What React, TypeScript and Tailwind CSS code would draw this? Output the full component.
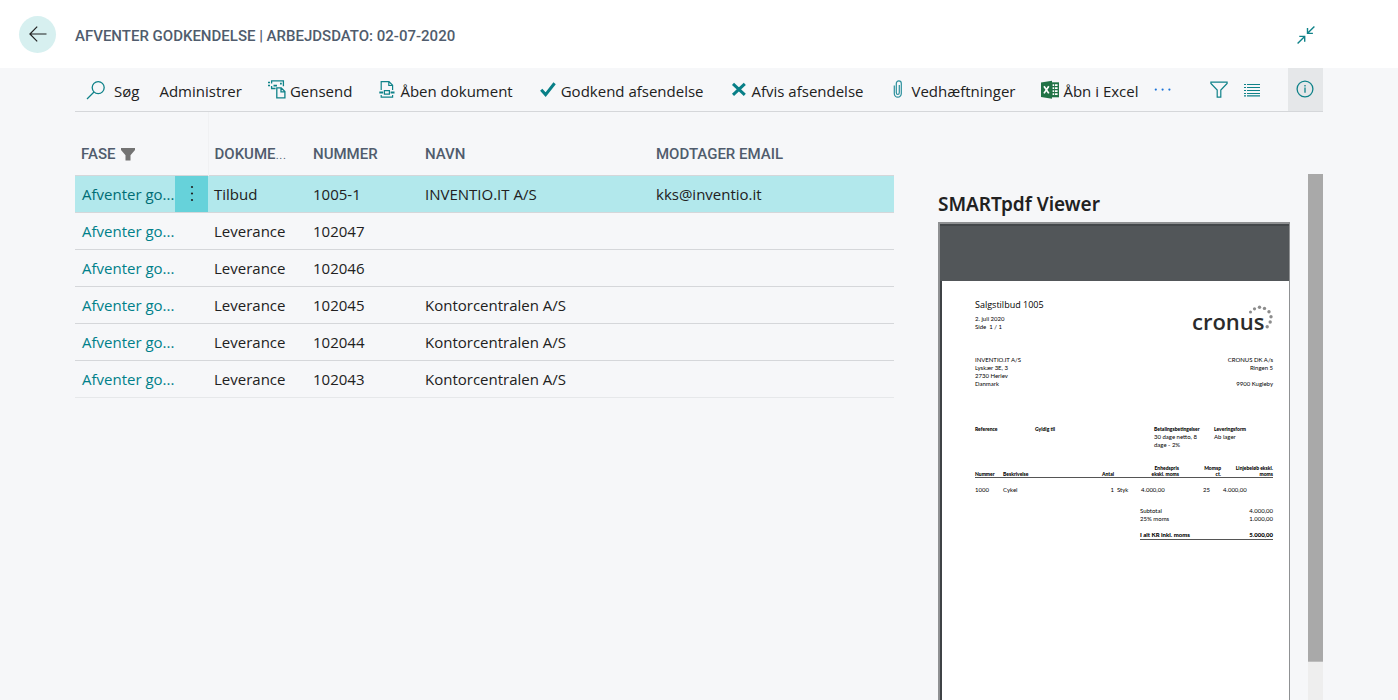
import { useState } from "react";
import type { ReactNode } from "react";

interface Approval {
  type: string;
  number: string;
  name: string;
  email: string;
}

interface Action {
  label: string;
  icon: ReactNode;
}

const approvals: Approval[] = [
  { type: "Tilbud", number: "1005-1", name: "INVENTIO.IT A/S", email: "kks@inventio.it" },
  { type: "Leverance", number: "102047", name: "", email: "" },
  { type: "Leverance", number: "102046", name: "", email: "" },
  { type: "Leverance", number: "102045", name: "Kontorcentralen A/S", email: "" },
  { type: "Leverance", number: "102044", name: "Kontorcentralen A/S", email: "" },
  { type: "Leverance", number: "102043", name: "Kontorcentralen A/S", email: "" },
];

const SearchIcon = () => (
  <svg width="20" height="20" viewBox="0 0 20 20" fill="none" stroke="#0f8289" strokeWidth="1.3" aria-hidden="true">
    <circle cx="12.2" cy="7.6" r="6" />
    <path d="M8 12 1 19" />
  </svg>
);

const ResendIcon = () => (
  <svg width="18" height="20" viewBox="0 0 18 20" fill="none" stroke="#0f8289" strokeWidth="1.3" aria-hidden="true">
    <path d="M3.6 3.6V.9h11.8v5.4M3.6 6v2.5h4" />
    <path d="M0 2.5h2M0 5.5h2M5.5 5.6H9M12 3.6h1.8" strokeWidth="1.6" />
    <path d="M8.8 7.9h4.4l3.7 3.7v6.2H8.8zM13 8v3.8h3.8" />
  </svg>
);

const DocumentIcon = () => (
  <svg width="18" height="20" viewBox="0 0 18 20" fill="none" stroke="#0f8289" strokeWidth="1.2" aria-hidden="true">
    <path d="M3.2 10V1.7H11l3.6 3.6V10M10.8 1.9v3.6h3.6M3.2 15v2.2h11.4V15" />
    <path d="M6.4 10.7h5v3.4h-5z" />
    <path d="M1.3 12.4h3.9M12.6 12.4h3.9" strokeWidth="2" />
  </svg>
);

const CheckIcon = () => (
  <svg width="18" height="20" viewBox="0 0 18 20" fill="none" stroke="#087f87" strokeWidth="3" aria-hidden="true">
    <path d="m2.2 9.8 4.4 4.8 9-11.3" />
  </svg>
);

const CrossIcon = () => (
  <svg width="18" height="20" viewBox="0 0 18 20" fill="none" stroke="#087f87" strokeWidth="3" aria-hidden="true">
    <path d="m3 3.9 11.8 11M14.8 3.9 3 14.9" />
  </svg>
);

const ClipIcon = () => (
  <svg width="18" height="20" viewBox="0 0 18 20" fill="none" stroke="#2b8f9c" strokeWidth="1.2" aria-hidden="true">
    <path d="M5.3 5.5v8a3.5 3.7 0 0 0 7 0v-10a2.5 2.7 0 0 0-5 0v9a1.5 2 0 0 0 3 0V5" />
  </svg>
);

const ExcelIcon = () => (
  <svg width="18" height="20" viewBox="0 0 18 20" aria-hidden="true">
    <path d="M9 2.3h9v15H9z" fill="#217346" />
    <path d="M11.6 4.2h1.6v1.7h-1.6zM14 4.2h2.6v1.7H14zM11.6 7.2h1.6v1.7h-1.6zM14 7.2h2.6v1.7H14zM11.6 10.2h1.6v1.7h-1.6zM14 10.2h2.6v1.7H14zM11.6 13.2h1.6v1.7h-1.6zM14 13.2h2.6v1.7H14z" fill="#fff" />
    <path d="M0 2.6 11 .8v18L0 17z" fill="#217346" />
    <path d="m3 6.2 4.8 7.2M7.8 6.2 3 13.4" stroke="#fff" strokeWidth="1.7" />
  </svg>
);

const FilterIcon = () => (
  <svg width="18" height="18" viewBox="0 0 18 18" fill="none" stroke="#0f8289" strokeWidth="1.2" aria-hidden="true">
    <path d="M.9 1.2h16.2v1.3L10.800 9v7.2H7.200V9L.9 2.500z" />
  </svg>
);

const ListIcon = () => (
  <svg width="16" height="14" viewBox="0 0 16 14" stroke="#0f8289" strokeWidth="1.2" aria-hidden="true">
    <path d="M0 1.500h2M0 4.500h2M0 7.500h2M0 10.500h2M0 12.900h2M3 1.500h13M3 4.500h13M3 7.500h13M3 10.500h13M3 12.900h13" />
  </svg>
);

const InfoIcon = () => (
  <svg width="18" height="18" viewBox="0 0 18 18" fill="none" stroke="#0f8289" strokeWidth="1.3" aria-hidden="true">
    <circle cx="9" cy="9" r="7.9" />
    <path d="M9 7.6v5.2M9 4.9v1.5" />
  </svg>
);

const actions: Action[] = [
  { label: "Gensend", icon: <ResendIcon /> },
  { label: "Åben dokument", icon: <DocumentIcon /> },
  { label: "Godkend afsendelse", icon: <CheckIcon /> },
  { label: "Afvis afsendelse", icon: <CrossIcon /> },
  { label: "Vedhæftninger", icon: <ClipIcon /> },
  { label: "Åbn i Excel", icon: <ExcelIcon /> },
];

const CronusLogo = () => (
  <div className="relative h-9 w-[81px]">
    <span className="absolute left-0 top-0 font-['Open_Sans',sans-serif] text-[22px] font-semibold leading-8 text-[#2b2b2b]">
      cronus
    </span>
    <svg className="absolute right-0 top-0" width="26" height="28" viewBox="0 0 26 28" fill="#8c8c8c" aria-hidden="true">
      <circle cx="3.5" cy="7" r="1.5" />
      <circle cx="7.5" cy="3.8" r="1.6" />
      <circle cx="12.5" cy="2.3" r="1.7" />
      <circle cx="17.5" cy="3.4" r="1.7" />
      <circle cx="22" cy="6.7" r="1.7" />
      <circle cx="24" cy="11.8" r="1.7" />
      <circle cx="23.2" cy="17" r="1.7" />
      <circle cx="20.2" cy="21.8" r="1.7" />
    </svg>
  </div>
);

const Invoice = () => (
  <div className="min-h-0 flex-1 bg-white pl-[33px] pr-4 pt-4 font-['Lato',sans-serif] text-[6px] leading-2 text-black">
    <div className="flex h-[59px] justify-between">
      <div>
        <h3 className="font-['Open_Sans',sans-serif] text-[9px] leading-4">Salgstilbud 1005</h3>
        <p className="pt-0.5">2. juli 2020</p>
        <p>Side&nbsp; 1 / 1</p>
      </div>
      <div className="pt-2">
        <CronusLogo />
      </div>
    </div>
    <div className="flex h-[69px] justify-between">
      <p>
        INVENTIO.IT A/S
        <br />
        Lyskær 3E, 3
        <br />
        2730 Herlev
        <br />
        Danmark
      </p>
      <p className="text-right">
        CRONUS DK A/s
        <br />
        Ringen 5
        <br />
        <br />
        9900 Kugleby
      </p>
    </div>
    <dl className="grid h-10 grid-cols-[60px_119px_60px_59px]">
      <div>
        <dt className="text-[5px] font-black">Reference</dt>
      </div>
      <div>
        <dt className="text-[5px] font-black">Gyldig til</dt>
      </div>
      <div>
        <dt className="text-[5px] font-black">Betalingsbetingelser</dt>
        <dd className="w-12">30 dage netto, 8 dage - 2%</dd>
      </div>
      <div>
        <dt className="text-[5px] font-black">Leveringsform</dt>
        <dd>Ab lager</dd>
      </div>
    </dl>
    <table className="w-full table-fixed border-collapse">
      <colgroup>
        <col className="w-7" />
        <col className="w-[72px]" />
        <col className="w-[39px]" />
        <col className="w-[27px]" />
        <col className="w-[38px]" />
        <col className="w-[42px]" />
        <col />
      </colgroup>
      <thead>
        <tr className="border-b border-[#555] align-bottom text-[5px] leading-[6px]">
          <th className="text-left font-black">Nummer</th>
          <th className="text-left font-black">Beskrivelse</th>
          <th className="text-right font-black">Antal</th>
          <th />
          <th className="text-right font-black">
            Enhedspris
            <br />
            ekskl. moms
          </th>
          <th className="text-right font-black">
            Momsp
            <br />
            ct.
          </th>
          <th className="text-right font-black">
            Linjebeløb ekskl.
            <br />
            moms
          </th>
        </tr>
      </thead>
      <tbody>
        <tr className="align-bottom">
          <td className="pt-2">1000</td>
          <td className="pt-2">Cykel</td>
          <td className="pt-2 text-right">1</td>
          <td className="pl-[3px] pt-2">Styk</td>
          <td className="pt-2">4.000,00</td>
          <td className="pr-[11px] pt-2 text-right">25</td>
          <td className="pl-0.5 pt-2">4.000,00</td>
        </tr>
      </tbody>
    </table>
    <dl className="ml-auto mt-[13px] w-[133px]">
      <div className="flex justify-between">
        <dt>Subtotal</dt>
        <dd>4.000,00</dd>
      </div>
      <div className="flex justify-between">
        <dt>25% moms</dt>
        <dd>1.000,00</dd>
      </div>
      <div className="mt-2 flex justify-between border-b border-[#555] font-black">
        <dt>I alt KR inkl. moms</dt>
        <dd>5.000,00</dd>
      </div>
    </dl>
  </div>
);

const App = () => {
  const [selected, setSelected] = useState<string>("1005-1");

  return (
    <div className="flex h-screen flex-col overflow-hidden bg-[#f6f7f9] font-['Open_Sans',sans-serif] text-[15px] text-[#212121]">
      <header className="flex h-[68px] shrink-0 items-center bg-white pl-[19px] pr-[83px]">
        <button aria-label="Tilbage" className="flex size-[37px] items-center justify-center rounded-full bg-[#d7f0f0]">
          <svg width="18" height="16" viewBox="0 0 18 16" fill="none" stroke="#212121" strokeWidth="1.2" aria-hidden="true">
            <path d="M8.2.6.9 8l7.300 7.400M.9 8H17.500" />
          </svg>
        </button>
        <h1 className="ml-[19px] pt-1 font-['Roboto',sans-serif] text-[15px] font-medium text-[#505c6d]">
          AFVENTER GODKENDELSE | ARBEJDSDATO: 02-07-2020
        </h1>
        <button aria-label="Minimer" className="ml-auto pt-0.5">
          <svg width="18" height="18" viewBox="0 0 18 18" fill="none" stroke="#0f8289" strokeWidth="1.4" aria-hidden="true">
            <path d="M17.4.6 10.800 7.100M10.500 2v5.400h5.400M.6 17.400l6.800-6.700M2.300 10.400h5.400v5.300" />
          </svg>
        </button>
      </header>

      <main className="flex min-h-0 flex-1 flex-col px-[75px]">
        <div className="flex h-11 shrink-0 items-center border-b border-[#d5d7da]">
          <button className="flex items-center gap-2 whitespace-nowrap pl-[11px]">
            <SearchIcon />
            <span className="pt-1">Søg</span>
          </button>
          <button className="ml-5 whitespace-nowrap pt-1">Administrer</button>
          <div className="ml-[26px] flex items-center gap-[26px]">
            {actions.map((action) => (
              <button key={action.label} className="flex items-center gap-1 whitespace-nowrap">
                {action.icon}
                <span className="pt-1">{action.label}</span>
              </button>
            ))}
          </div>
          <button aria-label="Flere indstillinger" className="ml-4">
            <svg width="18" height="4" viewBox="0 0 18 4" fill="#1a73d9" aria-hidden="true">
              <circle cx="1.8" cy="1.6" r="1.1" />
              <circle cx="8.6" cy="1.6" r="1.1" />
              <circle cx="15.4" cy="1.6" r="1.1" />
            </svg>
          </button>
          <div className="ml-auto flex items-center gap-4 self-stretch">
            <button aria-label="Filter">
              <FilterIcon />
            </button>
            <button aria-label="Listevisning">
              <ListIcon />
            </button>
            <button aria-label="Faktaboks" className="ml-3 flex w-[35px] items-center justify-center self-stretch bg-[#e5e7e9] pb-0.5 pr-px">
              <InfoIcon />
            </button>
          </div>
        </div>

        <div className="flex min-h-0 flex-1 gap-11">
          <div className="min-w-0 flex-1">
            <table className="w-full table-fixed border-collapse text-left">
              <colgroup>
                <col className="w-[100px]" />
                <col className="w-[33px]" />
                <col className="w-[99px]" />
                <col className="w-28" />
                <col className="w-[231px]" />
                <col />
              </colgroup>
              <thead>
                <tr className="h-[63px] border-b border-[#d5d7da] font-['Roboto',sans-serif] text-[15px] text-[#505c6d]">
                  <th className="pl-1.5 pt-[22px] font-medium">
                    <span className="flex items-center gap-1.5">
                      FASE
                      <svg width="14" height="13" viewBox="0 0 14 13" fill="#737373" aria-hidden="true">
                        <path d="M0 0h14v2L9.500 7.300v5.200h-5V7.300L0 2z" />
                      </svg>
                    </span>
                  </th>
                  <th className="border-r border-[#f0f1f3]" />
                  <th className="pl-1.5 pt-[22px] font-medium">
                    DOKUME<span className="font-light">...</span>
                  </th>
                  <th className="pl-1.5 pt-[22px] font-medium">NUMMER</th>
                  <th className="pl-1.5 pt-[22px] font-medium">NAVN</th>
                  <th className="pl-1.5 pt-[22px] font-medium">MODTAGER EMAIL</th>
                </tr>
              </thead>
              <tbody>
                {approvals.map((row) => {
                  const active = row.number === selected;
                  return (
                    <tr
                      key={row.number}
                      onClick={() => setSelected(row.number)}
                      className={`h-[37px] border-b border-[#d5d7da] last:border-[#e6e8ea] ${active ? "bg-[#b2e8ec]" : ""}`}
                    >
                      <td className="whitespace-nowrap pl-[7px] pt-0.5">
                        <a href="#" className={active ? "text-[#006d75]" : "text-[#00808a]"}>
                          Afventer go...
                        </a>
                      </td>
                      <td className={active ? "bg-[#66d2da]" : ""}>
                        {active && (
                          <button aria-label="Vis flere indstillinger" className="flex w-full justify-center">
                            <svg width="4" height="18" viewBox="0 0 4 18" fill="#212121" aria-hidden="true">
                              <circle cx="2" cy="2" r="1.1" />
                              <circle cx="2" cy="8.500" r="1.1" />
                              <circle cx="2" cy="15" r="1.1" />
                            </svg>
                          </button>
                        )}
                      </td>
                      <td className="truncate pl-1.5 pt-0.5">{row.type}</td>
                      <td className="truncate pl-1.5 pt-0.5">{row.number}</td>
                      <td className="truncate pl-1.5 pt-0.5">{row.name}</td>
                      <td className="truncate pl-1.5 pt-0.5">{row.email}</td>
                    </tr>
                  );
                })}
              </tbody>
            </table>
          </div>

          <aside className="flex w-[385px] shrink-0 pt-[62px]">
            <div className="flex min-h-0 flex-1 flex-col">
              <h2 className="pb-1 pt-4 font-['Noto_Sans',sans-serif] text-[19px] font-semibold leading-7">SMARTpdf Viewer</h2>
              <div className="mr-[18px] flex min-h-0 flex-1 flex-col border-l-2 border-r border-t-2 border-[#8f9193] bg-[#525659]">
                <div className="h-[57px] shrink-0 border-t-2 border-[#43474a]" />
                <div className="flex min-h-0 flex-1 flex-col border-l-2 border-[#3f4346]">
                  <Invoice />
                </div>
              </div>
            </div>
            <div className="flex w-[15px] flex-col bg-[#eeeeee]">
              <div className="h-[488px] border-b border-[#bdbdbd] bg-[#a9a9a9]" />
            </div>
          </aside>
        </div>
      </main>
    </div>
  );
};

export default App;
